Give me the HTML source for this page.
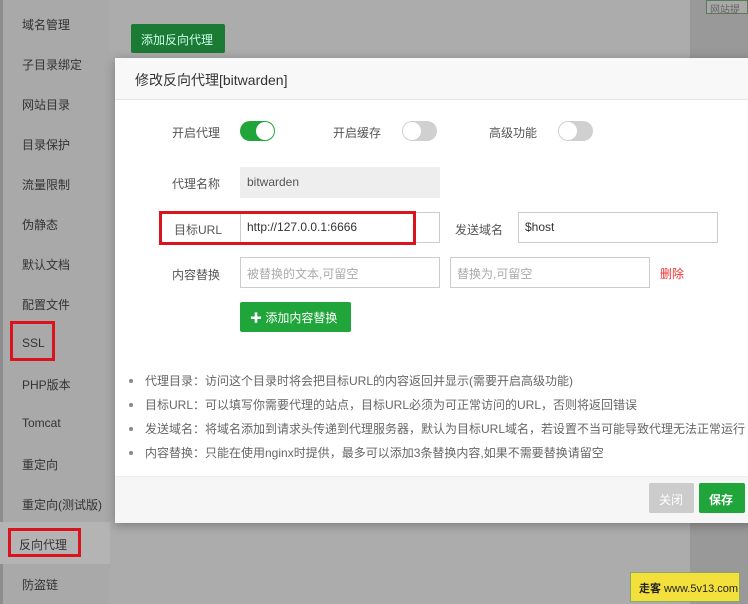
<!DOCTYPE html>
<html><head><meta charset="utf-8"><style>
*{margin:0;padding:0;box-sizing:border-box}
body{width:748px;height:604px;overflow:hidden;background:#acacac;font-family:"Liberation Sans","Noto Sans CJK SC",sans-serif;font-size:12px;color:#333;position:relative}
.side{position:absolute;left:0;top:0;width:110px;height:604px;background:#a9a9a9;border-left:3px solid #8e8e8e}
.side div{position:absolute;left:19px;font-size:12px;color:#333}
.act{position:absolute;left:0;top:522px;width:110px;height:42px;background:#b4b4b4}
.red{position:absolute;border:3px solid #d9141c}
.gbtn{position:absolute;background:#1b7a33;color:#cfe;border-radius:2px}
.modal{position:absolute;left:115px;top:58px;width:640px;height:465px;background:#fff;box-shadow:0 2px 10px rgba(0,0,0,.3)}
.hd{height:42px;background:#f8f8f8;border-bottom:1px solid #e6e6e6;padding:12px 0 0 20px;font-size:14px;color:#333}
.ab{position:absolute}
.inp{position:absolute;height:31px;border:1px solid #ccc;padding:7px 6px;font-size:12px;color:#555}
.lb{position:absolute;font-size:12px;color:#555}
.sw{position:absolute;width:35px;height:20px;border-radius:10px;background:#d0d0d0}
.sw i{position:absolute;top:1px;width:18px;height:18px;border-radius:50%;background:#fff}
.tips div{position:absolute;left:30px;font-size:12px;color:#666;white-space:nowrap}
.tips div:before{content:"";position:absolute;left:-16px;top:7px;width:4px;height:4px;border-radius:50%;background:#888}
.ft{position:absolute;left:0;top:418px;width:640px;height:47px;background:#f6f6f6;border-top:1px solid #eee}
</style></head><body>
<div class="side">
<div style="top:16px">域名管理</div>
<div style="top:56px">子目录绑定</div>
<div style="top:96px">网站目录</div>
<div style="top:136px">目录保护</div>
<div style="top:176px">流量限制</div>
<div style="top:216px">伪静态</div>
<div style="top:256px">默认文档</div>
<div style="top:296px">配置文件</div>
<div style="top:336px">SSL</div>
<div style="top:376px">PHP版本</div>
<div style="top:416px">Tomcat</div>
<div style="top:456px">重定向</div>
<div style="top:496px">重定向(测试版)</div>
<div style="top:576px">防盗链</div>
</div>
<div class="act"></div>
<div class="ab" style="left:19px;top:536px;font-size:12px;color:#333">反向代理</div>
<div class="red" style="left:10px;top:321px;width:45px;height:40px"></div>
<div class="red" style="left:8px;top:528px;width:73px;height:29px"></div>
<div class="ab" style="left:690px;top:0;width:58px;height:604px;background:#999"></div>
<div class="ab" style="left:706px;top:0;width:42px;height:14px;border:1px solid #5a7a5a;background:#a8a8a8;font-size:10px;color:#666;padding-left:3px">网站提</div>
<div class="gbtn" style="left:131px;top:24px;width:94px;height:29px;padding:7px 0 0 10px;font-size:12px">添加反向代理</div>
<div class="modal">
<div class="hd">修改反向代理[bitwarden]</div>
<div class="lb" style="left:57px;top:66px">开启代理</div>
<div class="sw" style="left:125px;top:63px;background:#20a53a"><i style="left:16px"></i></div>
<div class="lb" style="left:218px;top:66px">开启缓存</div>
<div class="sw" style="left:287px;top:63px"><i style="left:1px"></i></div>
<div class="lb" style="left:374px;top:66px">高级功能</div>
<div class="sw" style="left:443px;top:63px"><i style="left:1px"></i></div>
<div class="lb" style="left:57px;top:117px">代理名称</div>
<div class="inp" style="left:125px;top:109px;width:200px;background:#eee;border-color:#eee">bitwarden</div>
<div class="lb" style="left:59px;top:163px">目标URL</div>
<div class="inp" style="left:125px;top:154px;width:200px;color:#333">http://127.0.0.1:6666</div>
<div class="red" style="left:44px;top:153px;width:257px;height:34px"></div>
<div class="lb" style="left:340px;top:163px">发送域名</div>
<div class="inp" style="left:403px;top:154px;width:200px;color:#333">$host</div>
<div class="lb" style="left:57px;top:208px">内容替换</div>
<div class="inp" style="left:125px;top:199px;width:200px;color:#aaa">被替换的文本,可留空</div>
<div class="inp" style="left:335px;top:199px;width:200px;color:#aaa">替换为,可留空</div>
<div class="lb" style="left:545px;top:207px;color:#e33">删除</div>
<div class="ab" style="left:125px;top:244px;width:111px;height:30px;background:#20a53a;border-radius:2px;color:#fff;font-size:12px;padding:7px 0 0 10px"><b>✚</b> 添加内容替换</div>
<div class="tips">
<div style="top:314px">代理目录：访问这个目录时将会把目标URL的内容返回并显示(需要开启高级功能)</div>
<div style="top:338px">目标URL：可以填写你需要代理的站点，目标URL必须为可正常访问的URL，否则将返回错误</div>
<div style="top:362px">发送域名：将域名添加到请求头传递到代理服务器，默认为目标URL域名，若设置不当可能导致代理无法正常运行</div>
<div style="top:386px">内容替换：只能在使用nginx时提供，最多可以添加3条替换内容,如果不需要替换请留空</div>
</div>
<div class="ft">
<div class="ab" style="left:534px;top:6px;width:45px;height:30px;background:#ccc;color:#fff;border-radius:2px;padding:8px 0 0 10px">关闭</div>
<div class="ab" style="left:584px;top:6px;width:46px;height:30px;background:#20a53a;color:#fff;border-radius:2px;padding:8px 0 0 10px"><b>保存</b></div>
</div>
</div>
<div class="ab" style="left:630px;top:572px;width:110px;height:30px;background:#f3e03a;border:1px solid #8a6;font-size:11px;padding:7px 0 0 8px;color:#222"><b>走客</b> www.5v13.com</div>
</body></html>
